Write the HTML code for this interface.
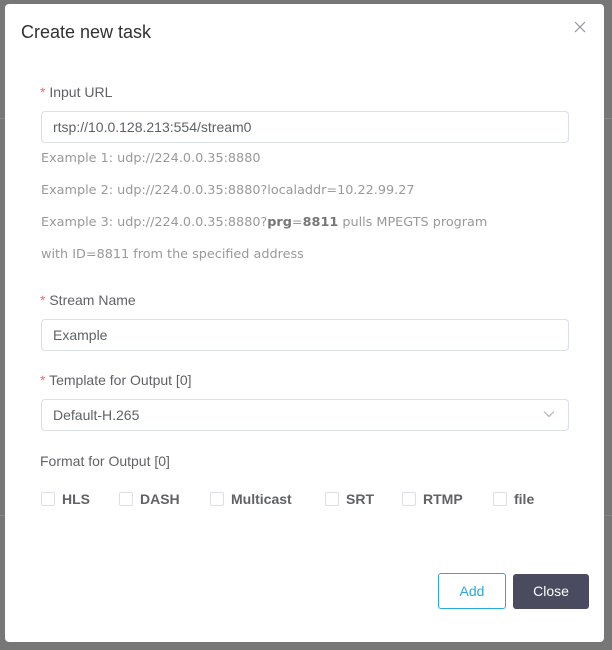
<!DOCTYPE html>
<html><head><meta charset="utf-8"><style>
body{margin:0;width:612px;height:650px;background:#777;position:relative;overflow:hidden;font-family:"Liberation Sans","Noto Sans CJK KR",sans-serif}
.bgl{position:absolute;left:0;width:612px;height:1px;background:#858585}
.dlg{position:absolute;left:5px;top:4px;width:599px;height:638px;background:#fff;border-radius:4px}
.a{position:absolute;white-space:nowrap}
.lbl{font-size:14px;color:#606266}
.req{color:#f56c6c}
.ex{font-size:12.8px;color:#999;font-family:"DejaVu Sans",sans-serif}
.inp{position:absolute;left:36px;width:526px;height:30px;border:1px solid #dcdfe6;border-radius:4px;font-size:14px;color:#606266;line-height:30px;padding-left:11px;box-sizing:content-box}
.cb{position:absolute;top:488px;width:12px;height:12px;border:1px solid #dcdfe6;border-radius:2px}
.cl{position:absolute;top:487px;font-size:14px;font-weight:bold;color:#606266}
</style></head><body>
<div class="bgl" style="top:118px"></div>
<div class="bgl" style="top:515px"></div>
<div class="dlg">
<div class="a" style="left:16px;top:18px;font-size:18px;color:#303133">Create new task</div>
<svg class="a" style="left:569px;top:17px" width="12" height="12" viewBox="0 0 12 12"><path d="M1 1L11 11M11 1L1 11" stroke="#909399" stroke-width="1.2"/></svg>
<div class="a lbl" style="left:35px;top:80px"><span class="req">*</span> Input URL</div>
<div class="inp" style="top:107px;width:515px">rtsp://10.0.128.213:554/stream0</div>
<div class="a ex" style="left:36px;top:147px">Example 1: udp://224.0.0.35:8880</div>
<div class="a ex" style="left:36px;top:179px">Example 2: udp://224.0.0.35:8880?localaddr=10.22.99.27</div>
<div class="a ex" style="left:36px;top:211px">Example 3: udp://224.0.0.35:8880?<b style="color:#777">prg</b>=<b style="color:#777">8811</b> pulls MPEGTS program</div>
<div class="a ex" style="left:36px;top:243px">with ID=8811 from the specified address</div>
<div class="a lbl" style="left:35px;top:288px"><span class="req">*</span> Stream Name</div>
<div class="inp" style="top:315px;width:515px">Example</div>
<div class="a lbl" style="left:35px;top:368px"><span class="req">*</span> Template for Output [0]</div>
<div class="inp" style="top:395px;width:515px">Default-H.265</div>
<svg class="a" style="left:538px;top:406px" width="12" height="8" viewBox="0 0 12 8"><path d="M1 1.5L6 6.5L11 1.5" stroke="#b0b3b8" fill="none" stroke-width="1.2"/></svg>
<div class="a lbl" style="left:35px;top:449px">Format for Output [0]</div>
<div class="cb" style="left:36px"></div><div class="cl" style="left:57px">HLS</div>
<div class="cb" style="left:114px"></div><div class="cl" style="left:135px">DASH</div>
<div class="cb" style="left:205px"></div><div class="cl" style="left:226px">Multicast</div>
<div class="cb" style="left:320px"></div><div class="cl" style="left:341px">SRT</div>
<div class="cb" style="left:397px"></div><div class="cl" style="left:418px">RTMP</div>
<div class="cb" style="left:488px"></div><div class="cl" style="left:509px">file</div>
<div class="a" style="left:433px;top:569px;width:66px;height:34px;border:1px solid #29a9e0;border-radius:3px;color:#29a9e0;font-size:14px;line-height:34px;text-align:center">Add</div>
<div class="a" style="left:508px;top:570px;width:76px;height:35px;background:#4a4b5e;border-radius:3px;color:#fff;font-size:14px;line-height:35px;text-align:center">Close</div>
</div>
</body></html>
